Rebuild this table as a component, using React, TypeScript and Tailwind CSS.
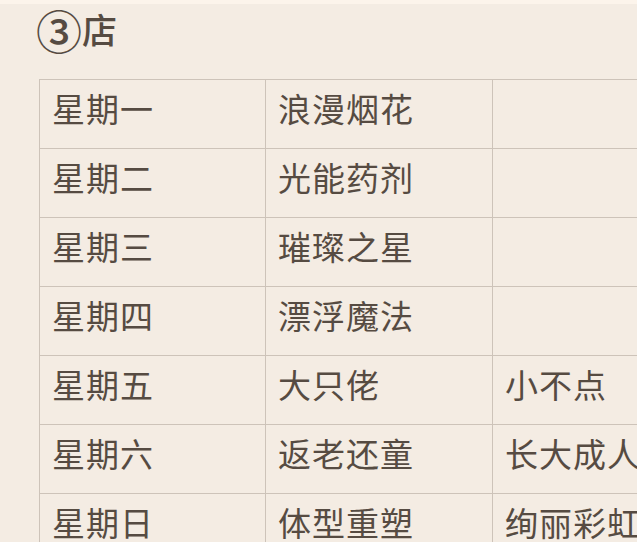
const rows: [string, string, string][] = [
  ["星期一", "浪漫烟花", ""],
  ["星期二", "光能药剂", ""],
  ["星期三", "璀璨之星", ""],
  ["星期四", "漂浮魔法", ""],
  ["星期五", "大只佬", "小不点"],
  ["星期六", "返老还童", "长大成人"],
  ["星期日", "体型重塑", "绚丽彩虹"],
];

export default function App() {
  return (
    <div
      className="relative h-[542px] w-[637px] overflow-hidden bg-[#f4ece3] text-[#564b42]"
      style={{ fontFamily: '"Noto Sans CJK SC", "Noto Sans", sans-serif' }}
    >
      <div className="h-[4px] bg-[#fcf4eb]" />
      <div className="flex h-[50px] items-center pl-[36px] font-medium">
        <span className="text-[46px] leading-[50px]">③</span>
        <span className="text-[35px] leading-[50px]">店</span>
      </div>
      <div className="ml-[39px] mt-[25px] w-[681px] border-l border-t border-[#cdc3b9]">
        {rows.map((r) => (
          <div key={r[0]} className="grid h-[69px] grid-cols-[226px_227px_227px] border-b border-[#cdc3b9]">
            {r.map((c, i) => (
              <div
                key={i}
                className="flex items-center border-r border-[#cdc3b9] pb-[12px] pl-[12px] text-[33px] leading-[44px] tracking-[1px] whitespace-nowrap"
              >
                {c}
              </div>
            ))}
          </div>
        ))}
      </div>
    </div>
  );
}
